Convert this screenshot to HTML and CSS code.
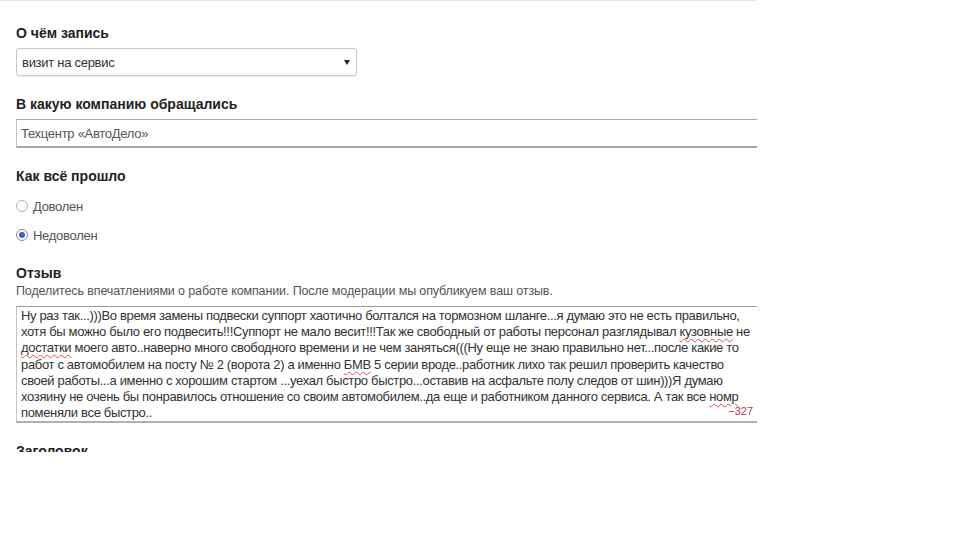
FILE: index.html
```html
<!DOCTYPE html>
<html lang="ru">
<head>
<meta charset="utf-8">
<title>Запись</title>
<link rel="stylesheet" href="styles.css">
</head>
<body>
<div class="page">
  <form class="form">
    <div class="field">
      <div class="label">О чём запись</div>
      <div class="select"><span>визит на сервис</span><i class="caret"></i></div>
    </div>
    <div class="field">
      <div class="label">В какую компанию обращались</div>
      <div class="input">Техцентр «АвтоДело»</div>
    </div>
    <div class="field">
      <div class="label">Как всё прошло</div>
      <div class="radios">
        <div class="radio"><span class="dot"></span>Доволен</div>
        <div class="radio"><span class="dot checked"></span>Недоволен</div>
      </div>
    </div>
    <div class="field">
      <div class="label tight">Отзыв</div>
      <div class="hint">Поделитесь впечатлениями о работе компании. После модерации мы опубликуем ваш отзыв.</div>
      <div class="textarea">Ну раз так...)))Во время замены подвески суппорт хаотично болтался на тормозном шланге...я думаю это не есть правильно,<br>хотя бы можно было его подвесить!!!Суппорт не мало весит!!!Так же свободный от работы персонал разглядывал <span class="sp">кузовные</span> не<br><span class="sp">достатки</span> моего авто..наверно много свободного времени и не чем заняться(((Ну еще не знаю правильно нет...после какие то<br>работ с автомобилем на посту № 2 (ворота 2) а именно <span class="sp">БМВ</span> 5 серии вроде..работник лихо так решил проверить качество<br>своей работы...а именно с хорошим стартом ...уехал быстро быстро...оставив на асфальте полу следов от шин)))Я думаю<br>хозяину не очень бы понравилось отношение со своим автомобилем..да еще и работником данного сервиса. А так все <span class="sp">номр</span><br>поменяли все быстро..<span class="counter">−327</span></div>
    </div>
    <div class="field">
      <div class="label">Заголовок</div>
    </div>
  </form>
</div>
</body>
</html>
```
FILE: styles.css
```css
html, body {
  margin: 0;
  padding: 0;
  background: #fff;
}
.page {
  width: 757px;
  height: 452px;
  overflow: hidden;
  border-top: 1px solid #e6e6e6;
  box-sizing: border-box;
  font-family: "Liberation Sans", Arial, sans-serif;
}
.form {
  padding: 23px 0 0 16px;
  display: flex;
  flex-direction: column;
  gap: 19px;
}
.field {
  display: flex;
  flex-direction: column;
}
.label {
  font-size: 14px;
  line-height: 18px;
  font-weight: bold;
  color: #222;
  margin-bottom: 6px;
}
.label.tight {
  margin-bottom: 1px;
}
.select {
  width: 341px;
  height: 28px;
  box-sizing: border-box;
  border: 1px solid #c8c8c8;
  border-radius: 3px;
  box-shadow: 0 1px 1px rgba(0,0,0,0.08);
  display: flex;
  align-items: center;
  justify-content: space-between;
  padding: 0 6px 0 5px;
  font-size: 13px;
  letter-spacing: -0.28px;
  color: #333;
}
.caret {
  width: 0;
  height: 0;
  border-left: 3px solid transparent;
  border-right: 3px solid transparent;
  border-top: 5px solid #222;
}
.input {
  width: 745px;
  height: 29px;
  box-sizing: border-box;
  border: 1px solid #c4c4c4;
  border-top-color: #a9a9a9;
  border-bottom: 2px solid #a8a8a8;
  display: flex;
  align-items: center;
  padding-left: 4px;
  font-size: 13px;
  letter-spacing: -0.28px;
  color: #555;
}
.radios {
  display: flex;
  flex-direction: column;
  gap: 9px;
  margin-top: 5px;
}
.radio {
  display: flex;
  align-items: center;
  height: 20px;
  font-size: 13px;
  letter-spacing: -0.28px;
  color: #555;
}
.dot {
  width: 12px;
  height: 12px;
  box-sizing: border-box;
  border: 1px solid #b0b0b0;
  border-radius: 50%;
  margin-right: 5px;
  display: flex;
  align-items: center;
  justify-content: center;
}
.dot.checked {
  border-color: #8a8a8a;
}
.dot.checked::after {
  content: "";
  width: 6px;
  height: 6px;
  border-radius: 50%;
  background: #2e63c8;
}
.hint {
  font-size: 12.5px;
  letter-spacing: -0.12px;
  line-height: 16px;
  color: #555;
  margin-bottom: 7px;
}
.textarea {
  position: relative;
  width: 745px;
  height: 117px;
  box-sizing: border-box;
  border: 1px solid #c4c4c4;
  border-top-color: #9a9a9a;
  border-bottom: 2px solid #b0b0b0;
  padding: 1px 4px;
  font-size: 13px;
  letter-spacing: -0.34px;
  line-height: 16.2px;
  color: #333;
  white-space: nowrap;
}
.sp {
  text-decoration: underline wavy #e24a4a;
  text-decoration-thickness: 1px;
  text-underline-offset: 2px;
}
.counter {
  position: absolute;
  right: 7px;
  bottom: 3px;
  font-size: 11px;
  line-height: 14px;
  letter-spacing: 0;
  color: #c0304a;
}
```
